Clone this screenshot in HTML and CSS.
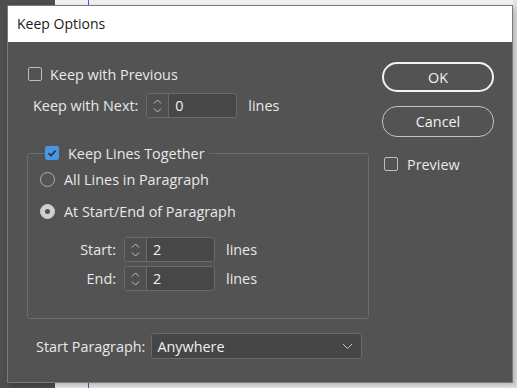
FILE: index.html
```html
<!DOCTYPE html>
<html lang="en">
<head>
  <meta charset="UTF-8">
  <title>Keep Options</title>
  <link rel="stylesheet" href="styles.css">
</head>
<body>

<div class="dialog">
  <div class="titlebar">Keep Options</div>

  <div class="dialog-body">
    <div class="left-col">
      <label class="check-row first-row">
        <span class="checkbox"></span>
        <span>Keep with Previous</span>
      </label>

      <div class="field-row next-row">
        <span class="field-label">Keep with Next:</span>
        <div class="spinner">
          <span class="spin-btn">
            <svg width="9" height="16" viewBox="0 0 9 16"><path d="M1 5.5 L4.5 2 L8 5.5 M1 10.5 L4.5 14 L8 10.5" fill="none" stroke="#c2c2c2" stroke-width="1"/></svg>
          </span>
          <span class="spin-value">0</span>
        </div>
        <span class="unit">lines</span>
      </div>

      <fieldset class="group">
        <legend class="group-legend">
          <span class="checkbox checked">
            <svg width="14" height="14" viewBox="0 0 14 14"><path d="M3.5 7.2 L6 9.6 L10.6 4.6" fill="none" stroke="#2b3a4c" stroke-width="1.8"/></svg>
          </span>
          <span>Keep Lines Together</span>
        </legend>

        <label class="radio-row">
          <span class="radio"></span>
          <span>All Lines in Paragraph</span>
        </label>
        <label class="radio-row radio-second">
          <span class="radio selected"></span>
          <span>At Start/End of Paragraph</span>
        </label>

        <div class="field-row sub-row start-row">
          <span class="field-label sub-label">Start:</span>
          <div class="spinner">
            <span class="spin-btn">
              <svg width="9" height="16" viewBox="0 0 9 16"><path d="M1 5.5 L4.5 2 L8 5.5 M1 10.5 L4.5 14 L8 10.5" fill="none" stroke="#c2c2c2" stroke-width="1"/></svg>
            </span>
            <span class="spin-value">2</span>
          </div>
          <span class="unit">lines</span>
        </div>
        <div class="field-row sub-row end-row">
          <span class="field-label sub-label">End:</span>
          <div class="spinner">
            <span class="spin-btn">
              <svg width="9" height="16" viewBox="0 0 9 16"><path d="M1 5.5 L4.5 2 L8 5.5 M1 10.5 L4.5 14 L8 10.5" fill="none" stroke="#c2c2c2" stroke-width="1"/></svg>
            </span>
            <span class="spin-value">2</span>
          </div>
          <span class="unit">lines</span>
        </div>
      </fieldset>

      <div class="field-row para-row">
        <span class="field-label para-label">Start Paragraph:</span>
        <div class="dropdown">
          <span>Anywhere</span>
          <svg width="11" height="7" viewBox="0 0 11 7"><path d="M1 1 L5.5 5.5 L10 1" fill="none" stroke="#c8c8c8" stroke-width="1"/></svg>
        </div>
      </div>
    </div>

    <div class="right-col">
      <button class="btn btn-ok">OK</button>
      <button class="btn btn-cancel">Cancel</button>
      <label class="check-row preview-row">
        <span class="checkbox"></span>
        <span>Preview</span>
      </label>
    </div>
  </div>
</div>

</body>
</html>
```

FILE: styles.css
```css
* {
  margin: 0;
  padding: 0;
  box-sizing: border-box;
  font-family: 'Open Sans', 'Noto Sans', sans-serif;
}

html, body {
  width: 100%;
  height: 100%;
  overflow: hidden;
}

/* the app window behind the dialog */
body {
  background: linear-gradient(to right, #4e4e4e 0 55px, #f0f0f0 55px 88px, #8a3ad6 88px 89px, #f0f0f0 89px 513px, #e2e2e2 513px);
  padding: 5px 0 0 7px;
  font-size: 14.4px;
  color: #e8e8e8;
}

.dialog {
  width: 506px;
  height: 378px;
  border: 1px solid #7a7a7a;
  background: #535353;
  box-shadow: 2px 3px 6px rgba(0, 0, 0, 0.25);
}

.titlebar {
  height: 36px;
  background: #ffffff;
  color: #1a1a1a;
  padding: 0 0 0 9px;
  line-height: 36px;
  font-size: 14px;
}

.dialog-body {
  display: flex;
  justify-content: space-between;
  padding: 20px 18px 0 19px;
}

.left-col {
  width: 342px;
  display: flex;
  flex-direction: column;
}

.right-col {
  width: 112px;
  display: flex;
  flex-direction: column;
}

.check-row, .radio-row {
  display: flex;
  align-items: center;
  height: 24px;
  gap: 8px;
}

.first-row {
  padding-left: 1px;
}

.checkbox {
  width: 14px;
  height: 14px;
  border: 1px solid #bdbdbd;
  border-radius: 2px;
  flex-shrink: 0;
  display: flex;
}

.checkbox.checked {
  background: #4a96e6;
  border-color: #4a96e6;
}

.checkbox.checked svg {
  margin: -1px;
}

.field-row {
  display: flex;
  align-items: center;
}

.next-row {
  margin-top: 7px;
  padding-left: 6px;
}

.field-label {
  margin-right: 8px;
}

.spinner {
  display: flex;
  width: 91px;
  height: 25px;
  border: 1px solid #6a6a6a;
  border-radius: 3px;
  background: #474747;
}

.spin-btn {
  width: 22px;
  border-right: 1px solid #6a6a6a;
  background: #4f4f4f;
  display: flex;
  align-items: center;
  justify-content: center;
  border-radius: 3px 0 0 3px;
}

.spin-value {
  padding-left: 6px;
  line-height: 23px;
  color: #f0f0f0;
}

.unit {
  margin-left: 11px;
}

.group {
  margin-top: 24px;
  width: 342px;
  height: 177px;
  border: 1px solid #6c6c6c;
  border-radius: 3px;
  padding: 0 0 0 12px;
}

.group-legend {
  display: flex;
  align-items: center;
  gap: 9px;
  margin-left: 5px;
  padding: 0 4px 0 0;
  height: 22px;
}

.radio-row {
  height: 26px;
  gap: 9px;
  margin-top: 2px;
}

.radio-second {
  margin-top: 6px;
}

.radio {
  width: 15px;
  height: 15px;
  border: 1.5px solid #b0b0b0;
  border-radius: 50%;
  flex-shrink: 0;
}

.radio.selected {
  background: #cfcfcf;
  border-color: #cfcfcf;
  display: flex;
  align-items: center;
  justify-content: center;
}

.radio.selected::after {
  content: "";
  width: 5px;
  height: 5px;
  border-radius: 50%;
  background: #505050;
}

.sub-row {
  justify-content: flex-start;
}

.sub-label {
  width: 76px;
  text-align: right;
}

.start-row {
  margin-top: 13px;
}

.end-row {
  margin-top: 4px;
}

.para-row {
  margin-top: 14px;
  padding-left: 9px;
}

.para-label {
  margin-right: 6px;
}

.dropdown {
  width: 211px;
  height: 26px;
  border: 1px solid #6a6a6a;
  border-radius: 3px;
  background: #464646;
  display: flex;
  align-items: center;
  justify-content: space-between;
  padding: 0 8px 0 5px;
  color: #f0f0f0;
}

.btn {
  height: 30px;
  border-radius: 15px;
  background: transparent;
  color: #f2f2f2;
  font-size: 14.4px;
  cursor: pointer;
}

.btn-ok {
  border: 2px solid #f2f2f2;
}

.btn-cancel {
  margin-top: 14px;
  height: 31px;
  border: 1px solid #c4c4c4;
}

.preview-row {
  margin-top: 15px;
  padding-left: 2px;
  gap: 9px;
}
```
